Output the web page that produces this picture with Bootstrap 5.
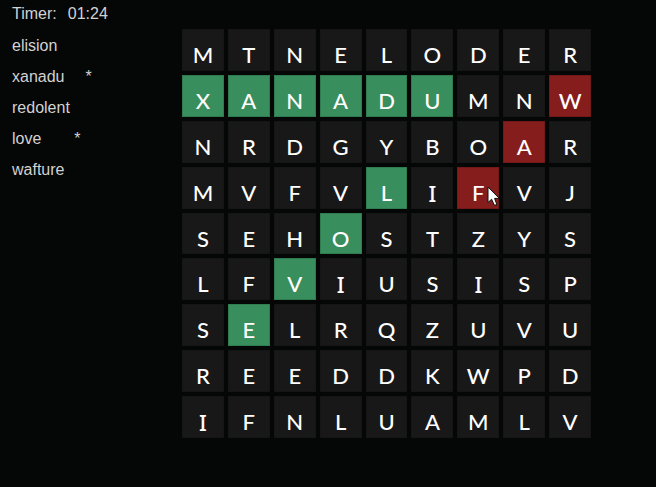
<!DOCTYPE html>
<html lang="en">
<head>
<meta charset="utf-8">
<meta name="viewport" content="width=device-width, initial-scale=1">
<title>Word Search</title>
<link rel="stylesheet" href="https://cdn.jsdelivr.net/npm/bootstrap@5.3.0/dist/css/bootstrap.min.css">
<style>
body { background: #050606; color: #d2d2d2; font-family: "Liberation Sans", Arial, sans-serif; font-size: 16px; line-height: 24px; }
.side { flex: 0 0 182px; padding: 2px 0 0 12px; }
.timer { gap: 11px; margin-bottom: 8px; }
.words { gap: 7px; }
.found-near { margin-left: 21px; }
.found-far { margin-left: 33px; }
.board-area { padding: 29px 0 48px; }
.board { grid-template-columns: repeat(9, 1fr); gap: 4px; max-width: 409px; }
.tile { aspect-ratio: 1; padding: 10px 0 0; background: #181818; color: #fff; border: 1px solid #151515; font: 500 22px/24px Lato, "Open Sans", sans-serif; }
.tile-i { font-family: "Noto Sans", sans-serif; }
.tile.hit { background: #388e5c; border-color: #2f7c50; }
.tile.pick { background: #861d1d; border-color: #741919; }
.pointer { left: 29px; top: 18px; z-index: 2; pointer-events: none; }
</style>
<script defer src="https://cdn.jsdelivr.net/npm/bootstrap@5.3.0/dist/js/bootstrap.bundle.min.js"></script>
</head>
<body>
<main class="d-flex min-vh-100">
  <aside class="side">
    <div class="timer d-flex"><span>Timer:</span><span>01:24</span></div>
    <ul class="words list-unstyled d-flex flex-column mb-0">
      <li>elision</li>
      <li class="d-flex"><span>xanadu</span><span class="found-near">*</span></li>
      <li>redolent</li>
      <li class="d-flex"><span>love</span><span class="found-far">*</span></li>
      <li>wafture</li>
    </ul>
  </aside>
  <section class="board-area flex-grow-1">
    <div class="board d-grid" id="board"></div>
  </section>
</main>
<template id="pointer">
  <svg class="pointer position-absolute" width="14" height="20" viewBox="0 0 14 20" aria-hidden="true"><path d="M1 1V16.5L4.6 13.2L7.2 19H10L7.6 12.4H12.3Z" fill="#fff" stroke="#111" stroke-width="1"/></svg>
</template>
<script>
const rows = ["MTNELODER", "XANADUMNW", "NRDGYBOAR", "MVFVLIFVJ", "SEHOSTZYS", "LFVIUSISP", "SELRQZUVU", "REEDDKWPD", "IFNLUAMLV"];
const hits = ["1,0", "1,1", "1,2", "1,3", "1,4", "1,5", "3,4", "4,3", "5,2", "6,1"];
const picks = ["1,8", "2,7", "3,6"];
const board = document.getElementById("board");
rows.forEach((row, r) => [...row].forEach((letter, c) => {
  const key = r + "," + c;
  const tile = document.createElement("button");
  tile.type = "button";
  tile.className = "tile position-relative d-flex justify-content-center align-items-center";
  if (letter === "I") tile.classList.add("tile-i");
  if (hits.includes(key)) tile.classList.add("hit");
  if (picks.includes(key)) tile.classList.add("pick");
  tile.textContent = letter;
  if (key === "3,6") tile.append(document.getElementById("pointer").content.cloneNode(true));
  board.append(tile);
}));
</script>
</body>
</html>
